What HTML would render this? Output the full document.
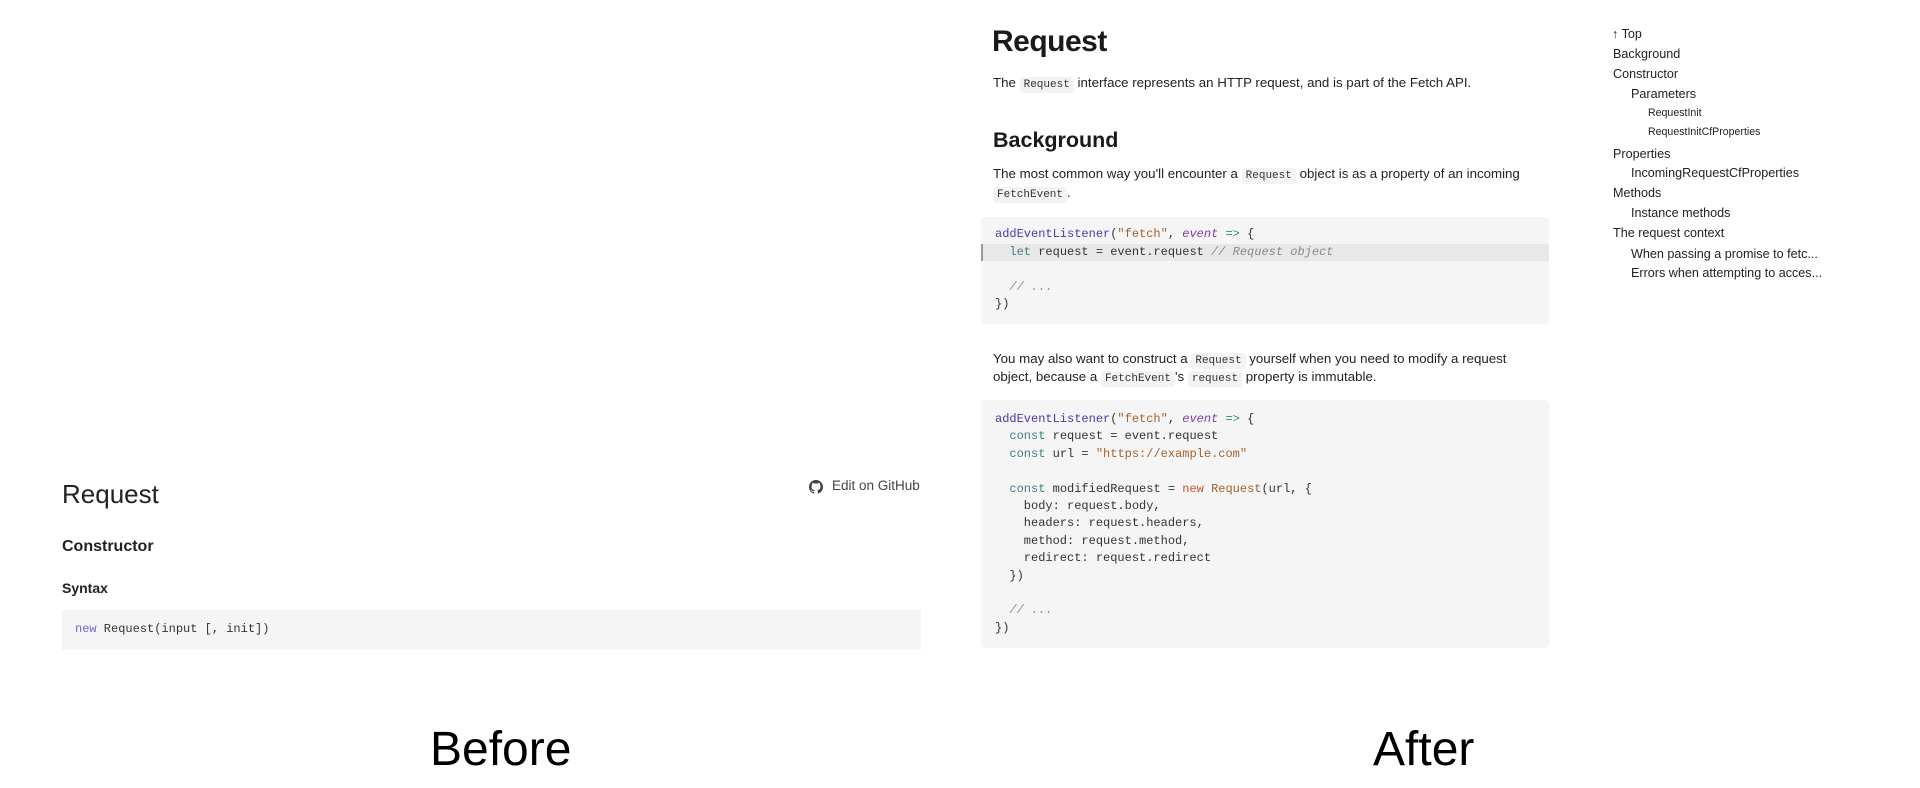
<!DOCTYPE html>
<html><head><meta charset="utf-8"><style>
*{margin:0;padding:0;box-sizing:border-box}
body{width:1920px;height:788px;background:#fff;position:relative;overflow:hidden;font-family:"Liberation Sans",sans-serif;color:#222}
.a{position:absolute;white-space:nowrap}
.m{font-family:"Liberation Mono",monospace}
code{font-family:"Liberation Mono",monospace;font-size:11px;background:#f3f3f3;padding:2px 4px;border-radius:3px;color:#333}
.cb{position:absolute;background:#f5f5f5;border-radius:4px}
.ln{position:absolute;left:14px;font-family:"Liberation Mono",monospace;font-size:12px;color:#333;white-space:pre;line-height:17px}
.f{color:#4a3aa8}.s{color:#a5622c}.e{color:#7b3fa0;font-style:italic}.k{color:#3f7f86}.c{color:#888;font-style:italic}.n{color:#c4572a}.o{color:#2a8a8a}
.t{position:absolute;font-size:12.6px;color:#222;white-space:nowrap}
.t2{left:1631px}.t3{left:1648px;font-size:10.6px}
</style></head><body>
<!-- Before -->
<div class="a" style="left:62px;top:479px;font-size:26px;font-weight:300;color:#222">Request</div>
<svg class="a" style="left:809px;top:480px" width="14" height="14" viewBox="0 0 16 16"><path fill="#444" d="M8 0C3.58 0 0 3.58 0 8c0 3.54 2.29 6.530 5.47 7.59.4.07.55-.17.55-.38 0-.19-.01-.82-.01-1.49-2.010.37-2.53-.49-2.69-.94-.09-.23-.48-.94-.82-1.13-.28-.15-.68-.52-.01-.53.63-.01 1.08.58 1.23.82.72 1.21 1.87.87 2.33.66.07-.52.28-.87.51-1.07-1.78-.2-3.64-.89-3.64-3.95 0-.87.31-1.59.82-2.15-.08-.2-.36-1.020.08-2.12 0 0 .67-.21 2.2.82.64-.18 1.32-.27 2-.27.68 0 1.36.09 2 .27 1.53-1.04 2.2-.82 2.2-.82.44 1.1.16 1.92.08 2.12.51.56.82 1.27.82 2.15 0 3.07-1.87 3.75-3.65 3.95.29.25.54.73.54 1.48 0 1.07-.01 1.93-.01 2.2 0 .21.15.46.55.38A8.013 8.013 0 0016 8c0-4.42-3.58-8-8-8z"/></svg>
<div class="a" style="left:832px;top:478px;font-size:13.5px;color:#444">Edit on GitHub</div>
<div class="a" style="left:62px;top:538px;font-size:16px;font-weight:bold;color:#222">Constructor</div>
<div class="a" style="left:62px;top:580px;font-size:14px;font-weight:bold;color:#222">Syntax</div>
<div class="cb" style="left:62px;top:610px;width:859px;height:40px;border-radius:0"></div>
<div class="a m" style="left:75px;top:622px;font-size:12px;color:#333"><span style="color:#7b5fd0">new</span> Request(input [, init])</div>
<div class="a" style="left:430px;top:722px;font-size:48px;color:#000">Before</div>

<!-- After -->
<div class="a" style="left:992px;top:25px;font-size:30px;font-weight:bold;color:#1a1a1a;letter-spacing:-0.5px">Request</div>
<div class="a" style="left:993px;top:75px;font-size:13.3px">The <code>Request</code> interface represents an HTTP request, and is part of the Fetch API.</div>
<div class="a" style="left:993px;top:128px;font-size:21.5px;font-weight:bold;color:#1a1a1a">Background</div>
<div class="a" style="left:993px;top:166px;font-size:13.3px">The most common way you'll encounter a <code>Request</code> object is as a property of an incoming</div>
<div class="a" style="left:993px;top:185px;font-size:13.3px"><code>FetchEvent</code>.</div>
<div class="cb" style="left:981px;top:217px;width:568px;height:107px"></div>
<div style="position:absolute;left:981px;top:244px;width:568px;height:17px;background:#e8e8e8;border-left:2px solid #999"></div>
<div class="cb" style="left:981px;top:217px;width:568px;height:107px;background:transparent">
<div class="ln" style="top:9px"><span class="f">addEventListener</span>(<span class="s">"fetch"</span>, <span class="e">event</span> <span class="o">=&gt;</span> {</div>
<div class="ln" style="top:27px">  <span class="k">let</span> request = event.request <span class="c">// Request object</span></div>
<div class="ln" style="top:62px">  <span class="c">// ...</span></div>
<div class="ln" style="top:79px">})</div>
</div>
<div class="a" style="left:993px;top:351px;font-size:13.3px">You may also want to construct a <code>Request</code> yourself when you need to modify a request</div>
<div class="a" style="left:993px;top:369px;font-size:13.3px">object, because a <code>FetchEvent</code>'s <code>request</code> property is immutable.</div>
<div class="cb" style="left:981px;top:400px;width:568px;height:248px">
<div class="ln" style="top:11px"><span class="f">addEventListener</span>(<span class="s">"fetch"</span>, <span class="e">event</span> <span class="o">=&gt;</span> {</div>
<div class="ln" style="top:28.4px">  <span class="k">const</span> request = event.request</div>
<div class="ln" style="top:45.8px">  <span class="k">const</span> url = <span class="s">"https://example.com"</span></div>
<div class="ln" style="top:80.6px">  <span class="k">const</span> modifiedRequest = <span class="n">new</span> <span class="s">Request</span>(url, {</div>
<div class="ln" style="top:98px">    body: request.body,</div>
<div class="ln" style="top:115.4px">    headers: request.headers,</div>
<div class="ln" style="top:132.8px">    method: request.method,</div>
<div class="ln" style="top:150.2px">    redirect: request.redirect</div>
<div class="ln" style="top:167.6px">  })</div>
<div class="ln" style="top:202.4px">  <span class="c">// ...</span></div>
<div class="ln" style="top:219.8px">})</div>
</div>
<div class="a" style="left:1373px;top:722px;font-size:48px;color:#000">After</div>

<!-- TOC -->
<div class="t" style="left:1612px;top:27px">↑ Top</div>
<div class="t" style="left:1613px;top:47px">Background</div>
<div class="t" style="left:1613px;top:67px">Constructor</div>
<div class="t t2" style="top:87px">Parameters</div>
<div class="t t3" style="top:107px">RequestInit</div>
<div class="t t3" style="top:126px">RequestInitCfProperties</div>
<div class="t" style="left:1613px;top:147px">Properties</div>
<div class="t t2" style="top:166px">IncomingRequestCfProperties</div>
<div class="t" style="left:1613px;top:186px">Methods</div>
<div class="t t2" style="top:206px">Instance methods</div>
<div class="t" style="left:1613px;top:226px">The request context</div>
<div class="t t2" style="top:247px">When passing a promise to fetc...</div>
<div class="t t2" style="top:266px">Errors when attempting to acces...</div>
</body></html>
